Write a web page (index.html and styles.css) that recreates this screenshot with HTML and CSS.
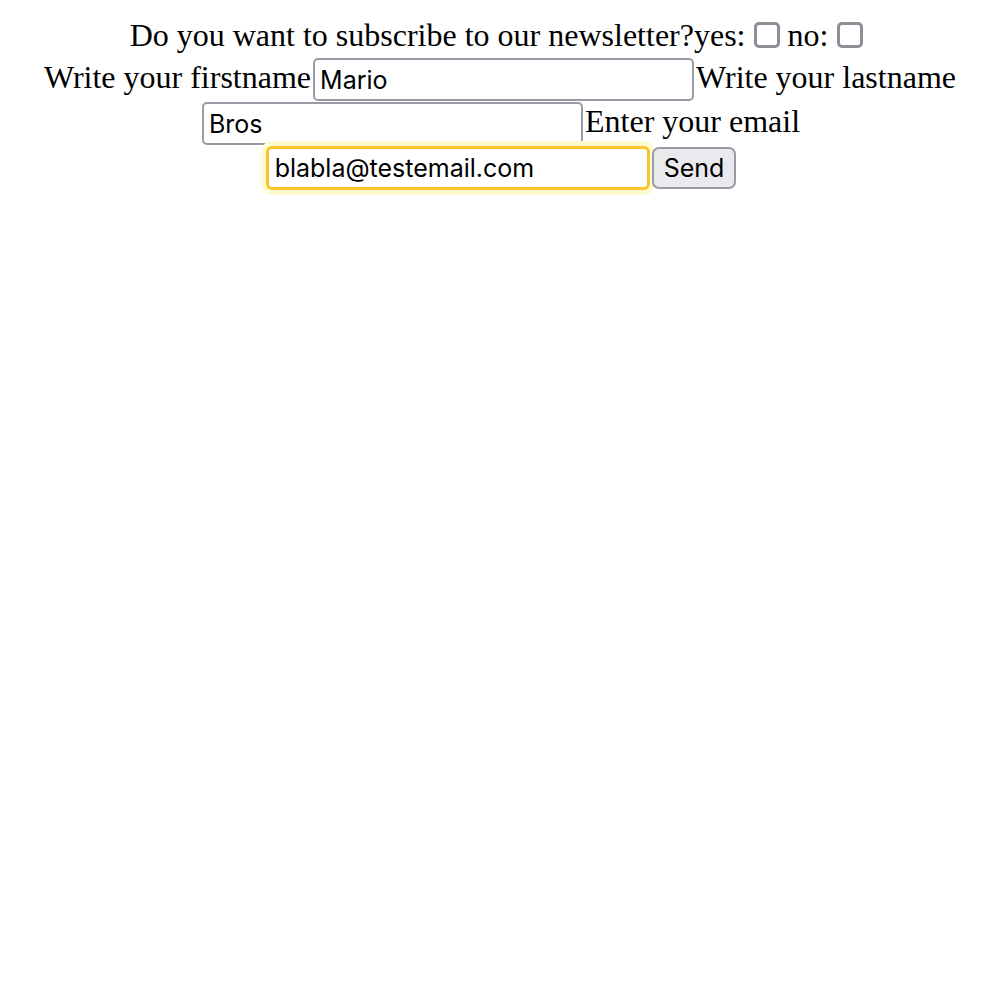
FILE: index.html
```html
<!DOCTYPE html>
<html>
<head>
<meta charset="utf-8">
<link rel="stylesheet" href="styles.css">
</head>
<body>
<form class="form">
<div class="line line-first">Do you want to subscribe to our newsletter?yes: <input class="check" type="checkbox"> no: <input class="check" type="checkbox"></div>
<div class="line">Write your firstname<input class="field" type="text" value="Mario">Write your lastname</div>
<div class="line"><input class="field" type="text" value="Bros">Enter your email</div>
<div class="line"><input class="field field-focus" type="email" value="blabla@testemail.com"><button class="send" type="button">Send</button></div>
</form>
</body>
</html>
```
FILE: styles.css
```css
html, body {
  background: #fff;
}
body {
  margin: 8px;
}
.form {
  padding: 7px 0 40px;
  text-align: center;
  font-family: "Liberation Serif", "Times New Roman", serif;
  font-size: 32px;
  color: #000;
}
.line {
  height: 44px;
  line-height: 44px;
  white-space: nowrap;
}
.line-first {
  height: 40px;
  line-height: 40px;
  padding-right: 8px;
}
.check {
  -webkit-appearance: none;
  appearance: none;
  width: 26px;
  height: 26px;
  box-sizing: border-box;
  border: 3px solid #8e8d98;
  border-radius: 5px;
  margin: 0 -1px 0 1px;
  vertical-align: -2px;
  background: #fff;
}
.field {
  box-sizing: border-box;
  width: 381px;
  height: 43px;
  border: 2px solid #9a99a4;
  border-radius: 5px;
  padding: 0 5px;
  font-family: Inter, "Liberation Sans", Arial, sans-serif;
  font-size: 25px;
  color: #000;
  margin: 3px 2px 0 2px;
  vertical-align: top;
  outline: none;
  background: #fff;
}
.field-focus {
  width: 384px;
  height: 44px;
  border: 3px solid #fbc52a;
  border-radius: 6px;
  padding: 0 6px;
  box-shadow: 0 0 0 5px #fefbd0;
  margin-right: 2px;
}
.send {
  box-sizing: border-box;
  height: 42px;
  padding: 0 10px;
  margin: 4px 0 0 0;
  border: 2px solid #9a99a4;
  border-radius: 7px;
  background: #e9e9ee;
  font-family: Inter, "Liberation Sans", Arial, sans-serif;
  font-size: 25px;
  color: #000;
  vertical-align: top;
}
```
